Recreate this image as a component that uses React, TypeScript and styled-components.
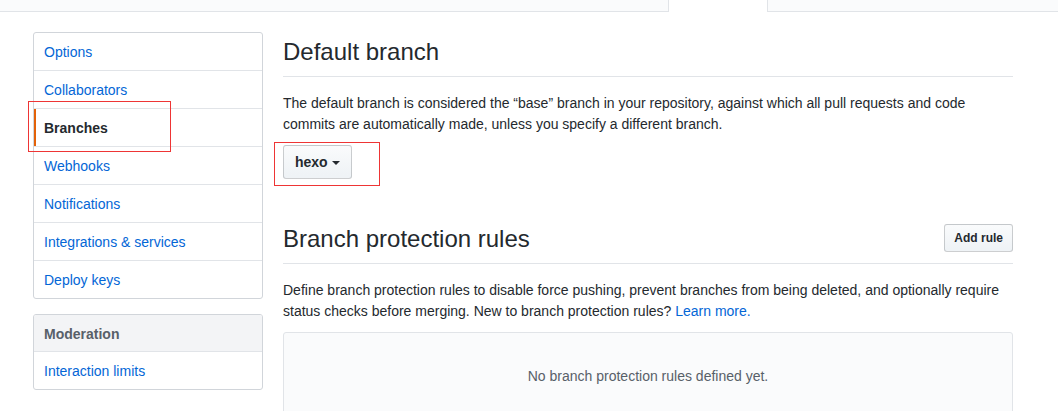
import React from "react";
import styled, { createGlobalStyle } from "styled-components";

const Global = createGlobalStyle`
  html, body { margin: 0; padding: 0; background: #fff; }
  body {
    font-family: "Liberation Sans", Arial, sans-serif;
    font-size: 14px;
    line-height: 1.5;
    color: #24292e;
  }
  * { box-sizing: border-box; }
`;

const Page = styled.div`
  position: relative;
  width: 1058px;
  height: 411px;
  overflow: hidden;
`;

const TabBar = styled.div`
  display: flex;
  height: 12px;
`;

const TabFiller = styled.div<{ $w?: number }>`
  ${(p) => (p.$w ? `width: ${p.$w}px;` : "flex: 1;")}
  background: #fafbfc;
  border-bottom: 1px solid #e1e4e8;
`;

const ActiveTab = styled.div`
  width: 100px;
  background: #fff;
  border-left: 1px solid #e1e4e8;
  border-right: 1px solid #e1e4e8;
`;

const Layout = styled.div`
  display: flex;
  align-items: flex-start;
  gap: 20px;
  padding: 20px 0 0 33px;
`;

const Sidebar = styled.nav`
  width: 230px;
  display: flex;
  flex-direction: column;
  gap: 15px;
`;

const Menu = styled.div`
  border: 1px solid #d1d5da;
  border-radius: 3px;
  background: #fff;
  overflow: hidden;
`;

const MenuHeading = styled.div`
  padding: 9px 10px 7px;
  line-height: 20px;
  font-size: 14px;
  font-weight: 700;
  color: #586069;
  background: #f3f4f6;
  border-bottom: 1px solid #e1e4e8;
`;

const MenuItem = styled.a<{ $active?: boolean }>`
  position: relative;
  display: block;
  padding: 9px 10px 7px;
  line-height: 21px;
  color: ${(p) => (p.$active ? "#24292e" : "#0366d6")};
  font-weight: ${(p) => (p.$active ? 700 : 400)};
  text-decoration: none;
  & + & { border-top: 1px solid #e1e4e8; }
  ${(p) =>
    p.$active &&
    `
    &::before {
      content: "";
      position: absolute;
      left: 0;
      top: 0;
      bottom: 0;
      width: 2px;
      background: #e36209;
    }
  `}
`;

const Main = styled.main`
  width: 730px;
  padding-top: 1px;
`;

const Subhead = styled.div<{ $spacious?: boolean }>`
  display: flex;
  align-items: center;
  padding-bottom: 7px;
  border-bottom: 1px solid #e1e4e8;
  margin-top: ${(p) => (p.$spacious ? "41px" : "0")};
`;

const SubheadTitle = styled.h2`
  flex: 1;
  margin: 0;
  padding-top: 1px;
  font-size: 24px;
  font-weight: 400;
  line-height: 35px;
  color: #24292e;
`;

const Text = styled.p`
  margin: 15px 0 0;
  padding-top: 1px;
  line-height: 21px;
  color: #24292e;
`;

const Link = styled.a`
  color: #0366d6;
  text-decoration: none;
`;

const Button = styled.button<{ $small?: boolean }>`
  display: inline-flex;
  align-items: center;
  gap: 4px;
  font-family: inherit;
  font-weight: 700;
  color: #24292e;
  background: linear-gradient(-180deg, #fafbfc 0%, #eff3f6 90%);
  border: 1px solid rgba(27, 31, 35, 0.2);
  border-radius: 3px;
  cursor: pointer;
  font-size: ${(p) => (p.$small ? "12px" : "14px")};
  line-height: 20px;
  padding: ${(p) => (p.$small ? "3px 9px" : "6px 11px")};
  height: ${(p) => (p.$small ? "28px" : "34px")};
`;

const BranchButton = styled(Button)`
  margin-top: 10px;
`;

const Caret = styled.span`
  display: inline-block;
  width: 0;
  height: 0;
  border-left: 4px solid transparent;
  border-right: 4px solid transparent;
  border-top: 4px solid #24292e;
  margin-top: 2px;
`;

const Blank = styled.div`
  margin-top: 10px;
  padding: 33px 32px 31px;
  background: #fafbfc;
  border: 1px solid #e1e4e8;
  border-radius: 3px;
  text-align: center;
  line-height: 21px;
  color: #586069;
  height: 120px;
`;

const Annotation = styled.div<{ $x: number; $y: number; $w: number; $h: number }>`
  position: absolute;
  left: ${(p) => p.$x}px;
  top: ${(p) => p.$y}px;
  width: ${(p) => p.$w}px;
  height: ${(p) => p.$h}px;
  border: 1px solid #ee3535;
  pointer-events: none;
`;

const items = [
  "Options",
  "Collaborators",
  "Branches",
  "Webhooks",
  "Notifications",
  "Integrations & services",
  "Deploy keys",
];

export default function App() {
  return (
    <Page>
      <Global />
      <TabBar>
        <TabFiller $w={668} />
        <ActiveTab />
        <TabFiller />
      </TabBar>
      <Layout>
        <Sidebar>
          <Menu>
            {items.map((it) => (
              <MenuItem key={it} href="#" $active={it === "Branches"}>
                {it}
              </MenuItem>
            ))}
          </Menu>
          <Menu>
            <MenuHeading>Moderation</MenuHeading>
            <MenuItem href="#">Interaction limits</MenuItem>
          </Menu>
        </Sidebar>
        <Main>
          <Subhead>
            <SubheadTitle>Default branch</SubheadTitle>
          </Subhead>
          <Text>
            The default branch is considered the “base” branch in your repository, against which all pull requests and code
            <br />
            commits are automatically made, unless you specify a different branch.
          </Text>
          <BranchButton>
            hexo <Caret />
          </BranchButton>
          <Subhead $spacious>
            <SubheadTitle>Branch protection rules</SubheadTitle>
            <Button $small>Add rule</Button>
          </Subhead>
          <Text>
            Define branch protection rules to disable force pushing, prevent branches from being deleted, and optionally require
            <br />
            status checks before merging. New to branch protection rules? <Link href="#">Learn more.</Link>
          </Text>
          <Blank>No branch protection rules defined yet.</Blank>
        </Main>
      </Layout>
      <Annotation $x={28} $y={101} $w={143} $h={51} />
      <Annotation $x={274} $y={142} $w={106} $h={44} />
    </Page>
  );
}
